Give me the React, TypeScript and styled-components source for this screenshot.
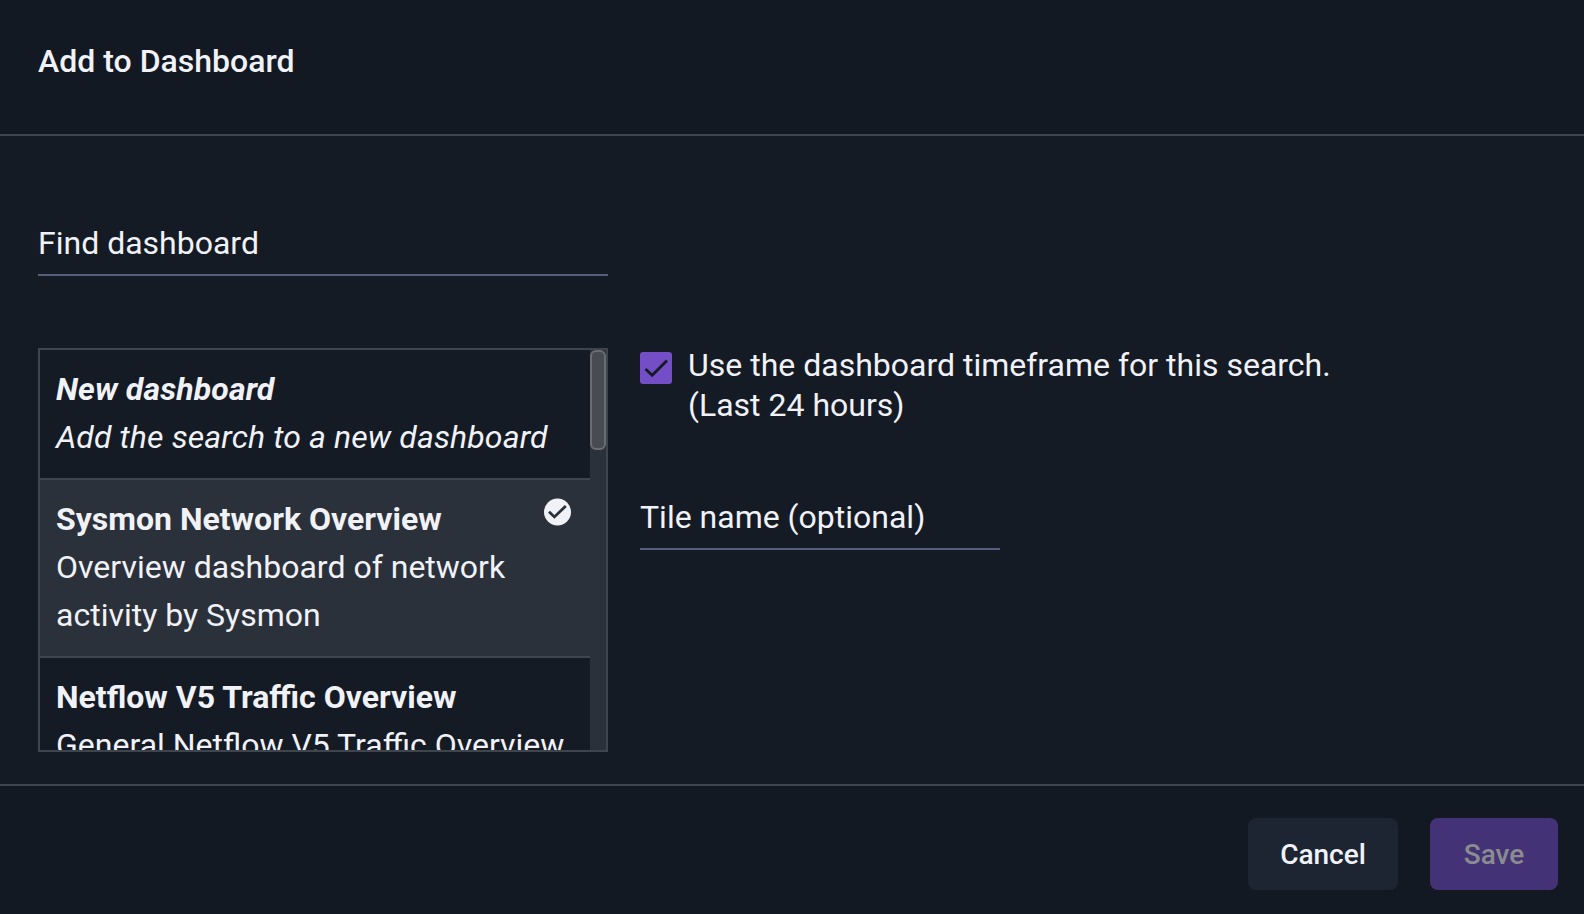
import React from "react";
import styled, { createGlobalStyle } from "styled-components";

const colors = {
  chrome: "#131922",
  body: "#151b24",
  line: "#3f454d",
  raised: "#2b313a",
  underline: "#565f79",
  text: "#f1f2f7",
  accent: "#744ec6",
};

const GlobalStyle = createGlobalStyle`
  * { box-sizing: border-box; }
  html, body { margin: 0; background: ${colors.body}; }
  body { font-family: Roboto, "Liberation Sans", sans-serif; font-size: 32px; color: ${colors.text}; }
`;

const Dialog = styled.div`
  display: flex;
  flex-direction: column;
  width: 1584px;
  height: 914px;
  overflow: hidden;
  background: ${colors.body};
`;

const Header = styled.header`
  flex: none;
  height: 136px;
  padding: 37px 38px 0;
  background: ${colors.chrome};
  border-bottom: 2px solid ${colors.line};
`;

const Title = styled.h1`
  margin: 0;
  font-size: 32px;
  font-weight: 500;
  line-height: 48px;
`;

const Content = styled.main`
  flex: 1;
  display: grid;
  grid-template-columns: 570px 1fr;
  grid-template-rows: 56px 404px;
  row-gap: 72px;
  column-gap: 32px;
  padding: 84px 38px 0;
`;

const Field = styled.label<{ $width: number }>`
  display: block;
  width: ${(p) => p.$width}px;
  height: 56px;
  padding-top: 1px;
  line-height: 44px;
  border-bottom: 2px solid ${colors.underline};
`;

const ListFrame = styled.div`
  grid-row: 2;
  display: flex;
  height: 404px;
  border: 2px solid ${colors.line};
  overflow: hidden;
`;

const List = styled.ul`
  flex: 1;
  margin: 0;
  padding: 0;
  list-style: none;
`;

const Item = styled.li<{ $selected?: boolean; $italic?: boolean }>`
  display: flex;
  justify-content: space-between;
  padding: 15px 16px 17px;
  line-height: 48px;
  font-style: ${(p) => (p.$italic ? "italic" : "normal")};
  letter-spacing: ${(p) => (p.$italic ? "0.12px" : "normal")};
  background: ${(p) => (p.$selected ? colors.raised : "transparent")};
  border-bottom: 2px solid ${colors.line};
`;

const ItemText = styled.div`
  flex: 1;
  min-width: 0;
`;

const ItemName = styled.div`
  font-weight: 700;
`;

const ItemDescription = styled.div``;

const SelectedMark = styled.svg`
  flex: none;
  width: 32px;
  height: 32px;
  margin-top: 1px;
`;

const Track = styled.div`
  flex: none;
  width: 16px;
  background: ${colors.raised};
`;

const Thumb = styled.div`
  height: 100px;
  border: 2px solid #6b6d73;
  border-radius: 6px;
  background: #484b52;
`;

const Options = styled.section`
  grid-row: 2;
  grid-column: 2;
`;

const CheckRow = styled.label`
  display: flex;
  gap: 16px;
  height: 146px;
  line-height: 40px;
`;

const CheckBox = styled.span`
  flex: none;
  width: 32px;
  height: 32px;
  margin-top: 4px;
  border-radius: 3px;
  background: ${colors.accent};
  svg { display: block; }
`;

const CheckLabel = styled.span`
  margin-top: -3px;
`;

const Footer = styled.footer`
  flex: none;
  display: flex;
  justify-content: flex-end;
  gap: 32px;
  height: 130px;
  padding: 32px 26px 0;
  background: ${colors.chrome};
  border-top: 2px solid ${colors.line};
`;

const Button = styled.button<{ $primary?: boolean }>`
  width: ${(p) => (p.$primary ? 128 : 150)}px;
  height: 72px;
  padding: 2px 0 0;
  border: 0;
  border-radius: 8px;
  font: 500 28px/70px Roboto, "Liberation Sans", sans-serif;
  color: ${(p) => (p.$primary ? "#8a8c90" : colors.text)};
  background: ${(p) => (p.$primary ? "#443276" : "#1d2533")};
`;

interface Dashboard {
  name: string;
  description: string;
  italic?: boolean;
  selected?: boolean;
}

const dashboards: Dashboard[] = [
  { name: "New dashboard", description: "Add the search to a new dashboard", italic: true },
  {
    name: "Sysmon Network Overview",
    description: "Overview dashboard of network activity by Sysmon",
    selected: true,
  },
  { name: "Netflow V5 Traffic Overview", description: "General Netflow V5 Traffic Overview" },
];

export default function App() {
  return (
    <>
      <GlobalStyle />
      <Dialog role="dialog">
        <Header>
          <Title>Add to Dashboard</Title>
        </Header>
        <Content>
          <Field $width={570}>Find dashboard</Field>
          <ListFrame>
            <List>
              {dashboards.map((d) => (
                <Item key={d.name} $selected={d.selected} $italic={d.italic}>
                  <ItemText>
                    <ItemName>{d.name}</ItemName>
                    <ItemDescription>{d.description}</ItemDescription>
                  </ItemText>
                  {d.selected && (
                    <SelectedMark viewBox="0 0 32 32">
                      <circle cx="15.5" cy="16" r="13.5" fill={colors.text} />
                      <path d="M7 15.7l5.4 5.2L23.8 10" fill="none" stroke={colors.raised} strokeWidth="2.8" />
                    </SelectedMark>
                  )}
                </Item>
              ))}
            </List>
            <Track>
              <Thumb />
            </Track>
          </ListFrame>
          <Options>
            <CheckRow>
              <CheckBox>
                <svg width="32" height="32" viewBox="0 0 32 32">
                  <path d="M5.5 17l6.7 6.3L27 8.6" fill="none" stroke={colors.body} strokeWidth="2.8" />
                </svg>
              </CheckBox>
              <CheckLabel>
                Use the dashboard timeframe for this search.
                <br />
                (Last 24 hours)
              </CheckLabel>
            </CheckRow>
            <Field $width={360}>Tile name (optional)</Field>
          </Options>
        </Content>
        <Footer>
          <Button>Cancel</Button>
          <Button $primary>Save</Button>
        </Footer>
      </Dialog>
    </>
  );
}
